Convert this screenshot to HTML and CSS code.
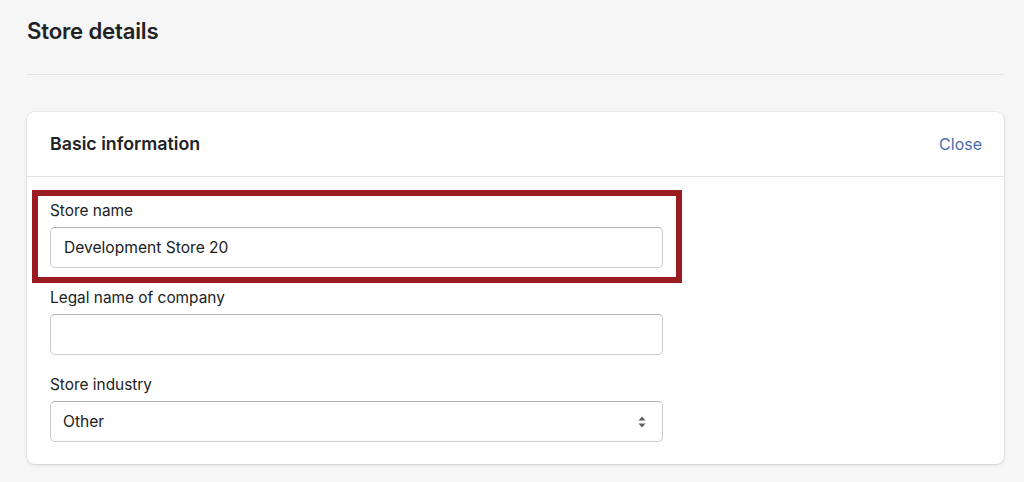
FILE: index.html
```html
<!DOCTYPE html>
<html lang="en">
<head>
<meta charset="utf-8">
<title>Store details</title>
<link rel="stylesheet" href="styles.css">
</head>
<body>
<div class="page">
  <header class="page-header">
    <h1 class="page-title">Store details</h1>
  </header>
  <section class="card">
    <div class="card-header">
      <h2 class="card-title">Basic information</h2>
      <a class="card-action" href="#">Close</a>
    </div>
    <div class="card-body">
      <div class="highlight"></div>
      <div class="field">
        <label class="field-label">Store name</label>
        <div class="input"><span class="input-text">Development Store 20</span></div>
      </div>
      <div class="field">
        <label class="field-label">Legal name of company</label>
        <div class="input"></div>
      </div>
      <div class="field">
        <label class="field-label">Store industry</label>
        <div class="input select">
          <span class="input-text select-text">Other</span>
          <svg class="select-arrows" width="8" height="12" viewBox="0 0 8 12" aria-hidden="true">
            <path d="M4 0.5 L7.5 4.5 H0.5 Z" fill="#5c5f62"/>
            <path d="M4 11.5 L7.5 7.5 H0.5 Z" fill="#5c5f62"/>
          </svg>
        </div>
      </div>
    </div>
  </section>
</div>
</body>
</html>
```

FILE: styles.css
```css
* { box-sizing: border-box; }
html, body {
  margin: 0;
  padding: 0;
  background: #f6f6f7;
  font-family: Inter, "Liberation Sans", Arial, sans-serif;
  color: #202223;
}
.page {
  padding: 0 20px 0 27px;
  height: 482px;
  overflow: hidden;
}
.page-header {
  height: 75px;
  border-bottom: 1px solid #e1e3e5;
  padding-top: 17px;
}
.page-title {
  margin: 0;
  font-size: 22.2px;
  line-height: 28px;
  font-weight: 600;
  letter-spacing: -0.2px;
  color: #202223;
}
.card {
  margin-top: 37px;
  background: #ffffff;
  border-radius: 8px;
  box-shadow: 0 0 0 1px rgba(63, 63, 68, 0.05), 0 1px 3px 0 rgba(63, 63, 68, 0.15);
}
.card-header {
  height: 65px;
  border-bottom: 1px solid #e1e3e5;
  display: flex;
  align-items: center;
  justify-content: space-between;
  padding: 0 22px 0 23px;
}
.card-title {
  margin: 0;
  font-size: 17.8px;
  line-height: 24px;
  font-weight: 600;
  color: #202223;
}
.card-action {
  font-size: 16px;
  color: #4a6ea9;
  text-decoration: none;
}
.card-body {
  position: relative;
  padding: 24px 341px 22px 23px;
  display: flex;
  flex-direction: column;
  gap: 20px;
}
.field {
  display: flex;
  flex-direction: column;
  gap: 6px;
}
.field-label {
  font-size: 15.4px;
  line-height: 20px;
  color: #202223;
}
.input {
  height: 41px;
  border: 1px solid #c9cccf;
  border-top-color: #aeb4b9;
  border-radius: 5px;
  background: #ffffff;
  display: flex;
  align-items: center;
  padding: 0 13px;
}
.input-text {
  font-size: 15.6px;
  color: #202223;
}
.select {
  justify-content: space-between;
  padding: 0 16px 0 12px;
}
.select-arrows { display: block; }
.highlight {
  position: absolute;
  left: 5px;
  top: 13px;
  width: 650px;
  height: 93px;
  border: 6px solid #9b1c20;
  pointer-events: none;
}
```
